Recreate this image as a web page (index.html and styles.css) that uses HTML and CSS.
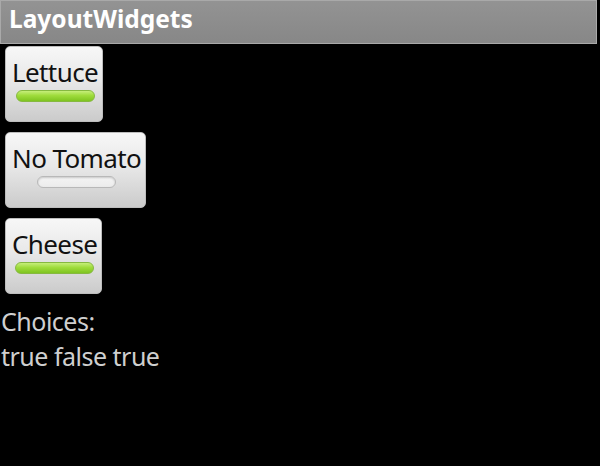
FILE: index.html
```html
<!DOCTYPE html>
<html>
<head>
<meta charset="utf-8">
<link rel="stylesheet" href="styles.css">
</head>
<body>
<div class="titlebar">LayoutWidgets</div>
<div class="content">
  <div class="toggle on"><span class="label">Lettuce</span><span class="indicator"></span></div>
  <div class="toggle off"><span class="label">No Tomato</span><span class="indicator"></span></div>
  <div class="toggle on"><span class="label">Cheese</span><span class="indicator"></span></div>
  <div class="result">Choices:<br>true false true</div>
</div>
</body>
</html>
```
FILE: styles.css
```css
html, body {
  margin: 0;
  padding: 0;
  background: #000;
  width: 600px;
  height: 466px;
  overflow: hidden;
  font-family: "Noto Sans", "Open Sans", sans-serif;
}
.titlebar {
  box-sizing: border-box;
  height: 44px;
  margin-right: 3px;
  padding-left: 8px;
  background: linear-gradient(#939393, #878787);
  border: 1px solid #a9a9a9;
  color: #fff;
  font-weight: bold;
  font-size: 24.5px;
  line-height: 36px;
}
.content {
  display: flex;
  flex-direction: column;
  align-items: flex-start;
  gap: 10px;
  padding: 2px 0 0 5px;
}
.toggle {
  box-sizing: border-box;
  height: 76px;
  min-width: 97px;
  display: flex;
  flex-direction: column;
  align-items: center;
  padding: 8px 4px 0 6px;
  border-radius: 5px;
  border: 1px solid #bdbdbd;
  background: linear-gradient(#f7f7f7 0%, #e8e8e8 45%, #cbcbcb 100%);
}
.label {
  font-size: 26px;
  letter-spacing: -0.6px;
  line-height: 34px;
  color: #111;
  white-space: nowrap;
}
.indicator {
  width: 79px;
  height: 12px;
  margin-top: 1px;
  border-radius: 6px;
  box-sizing: border-box;
}
.on .indicator {
  background: linear-gradient(#c6ee7a 0%, #9fdc3c 45%, #7fc421 100%);
  border: 1px solid #86b940;
}
.off .indicator {
  background: linear-gradient(#f4f4f4, #ececec);
  border: 1px solid #b8b8b8;
  box-shadow: inset 0 1px 2px rgba(0, 0, 0, 0.18);
}
.result {
  margin-left: -4px;
  color: #cfcfcf;
  font-size: 25px;
  letter-spacing: -0.5px;
  line-height: 35px;
}
```
